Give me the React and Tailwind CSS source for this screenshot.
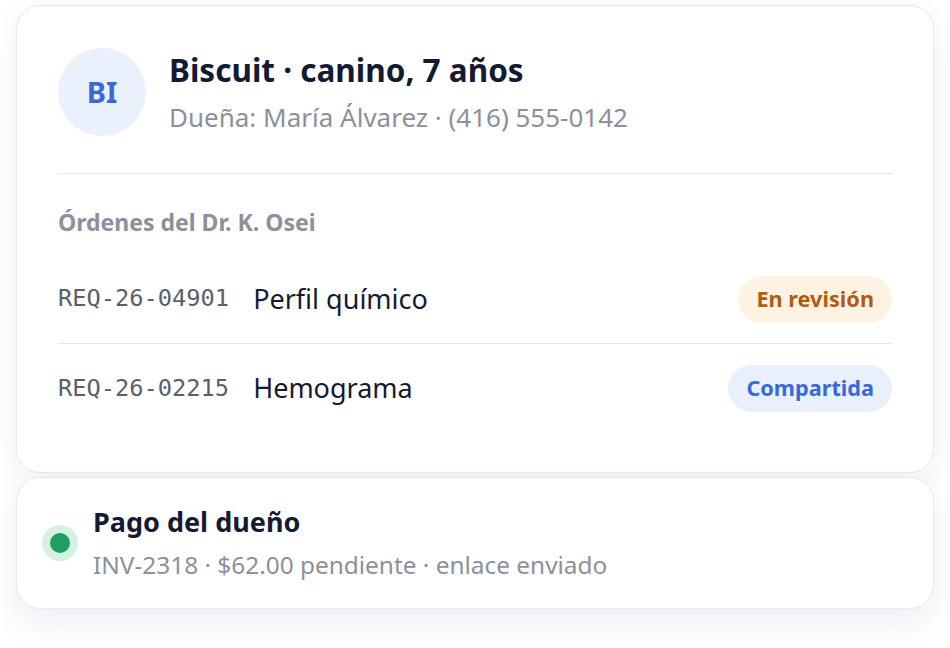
import React from "react";

const orders = [
  {
    id: "REQ-26-04901",
    name: "Perfil químico",
    status: "En revisión",
    badge: "bg-[#fef3e2] text-[#b45a10]",
  },
  {
    id: "REQ-26-02215",
    name: "Hemograma",
    status: "Compartida",
    badge: "bg-[#e9f0fd] text-[#3a68dc]",
  },
];

export default function App() {
  return (
    <div className="min-h-[648px] bg-white px-[16px] pt-[5px] font-['Noto_Sans',sans-serif]">
      {/* Ficha del paciente */}
      <div className="rounded-[24px] border border-[#e6e8f2] bg-white px-[41px] pt-[42px] pb-[39px] shadow-[0_10px_30px_rgba(40,50,110,0.07)]">
        <div className="flex items-center gap-[23px]">
          <div className="flex h-[88px] w-[88px] shrink-0 items-center justify-center rounded-full bg-[#eaf1fd] text-[29px] font-bold text-[#3a68dc]">
            BI
          </div>
          <div>
            <h1 className="text-[31.5px] leading-[38px] font-bold text-[#141a33]">
              Biscuit · canino, 7 años
            </h1>
            <p className="mt-[12px] text-[26px] leading-[32px] text-[#8b909c]">
              Dueña: María Álvarez · (416) 555-0142
            </p>
          </div>
        </div>

        <div className="mt-[37px] border-t border-[#e7e8ee]" />

        <p className="mt-[33px] text-[23px] leading-[30px] font-bold text-[#8b909c]">
          Órdenes del Dr. K. Osei
        </p>

        <div className="mt-[18px]">
          {orders.map((o, i) => (
            <div
              key={o.id}
              className={`flex h-[89px] items-center ${
                i === 0 ? "border-b border-[#e7e8ee]" : ""
              }`}
            >
              <span className="font-['DejaVu_Sans_Mono',monospace] text-[23.7px] text-[#5b606c]">
                {o.id}
              </span>
              <span className="ml-[24px] flex-1 text-[27px] text-[#141a33]">
                {o.name}
              </span>
              <span
                className={`flex h-[47px] items-center rounded-full px-[18px] text-[21.7px] font-bold ${o.badge}`}
              >
                {o.status}
              </span>
            </div>
          ))}
        </div>
      </div>

      {/* Pago */}
      <div className="mt-[4px] flex items-center gap-[15px] rounded-[24px] border border-[#e6e8f2] bg-white px-[25px] pt-[27px] pb-[27px] shadow-[0_14px_34px_rgba(40,50,110,0.08)]">
        <div className="flex h-[36px] w-[36px] shrink-0 items-center justify-center rounded-full bg-[#d5f1e2]">
          <div className="h-[20px] w-[20px] rounded-full bg-[#1f9d63]" />
        </div>
        <div>
          <p className="text-[27px] leading-[34px] font-bold text-[#141a33]">
            Pago del dueño
          </p>
          <p className="mt-[10px] text-[24.4px] leading-[32px] text-[#8b909c]">
            INV-2318 · $62.00 pendiente · enlace enviado
          </p>
        </div>
      </div>
    </div>
  );
}
